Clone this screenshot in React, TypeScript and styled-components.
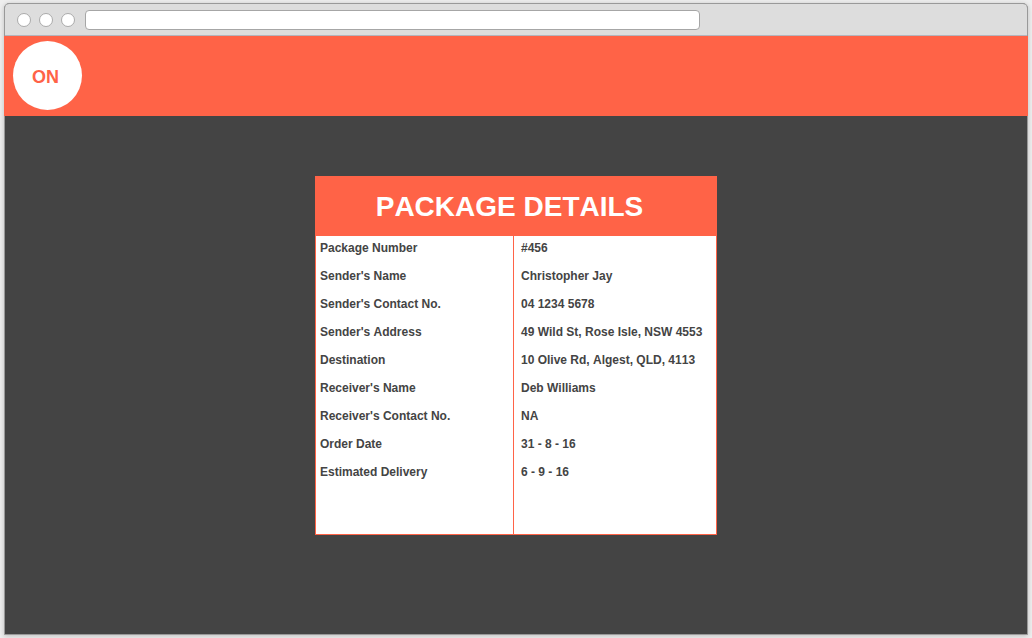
import React from "react";
import styled, { createGlobalStyle } from "styled-components";

const GlobalStyle = createGlobalStyle`
  *, *::before, *::after { box-sizing: border-box; }
  body {
    margin: 0;
    background: #eeeeee;
    font-family: "Liberation Sans", Arial, Helvetica, sans-serif;
    font-kerning: none;
    color: #444444;
  }
`;

const Page = styled.div`
  display: flex;
  min-height: 100vh;
  padding: 3px 4px;
`;

const BrowserWindow = styled.div`
  flex: 1;
  display: flex;
  flex-direction: column;
  min-width: 0;
  border: 1px solid #999999;
  border-radius: 5px 5px 0 0;
  background: #444444;
  box-shadow: 0 1px 5px rgba(0, 0, 0, 0.2);
`;

const BrowserBar = styled.div`
  display: flex;
  align-items: center;
  gap: 8px;
  height: 32px;
  padding: 0 12px;
  border-bottom: 1px solid #b4b4bc;
  border-radius: 4px 4px 0 0;
  background: #dddddd;
`;

const WindowDot = styled.span`
  flex: none;
  width: 14px;
  height: 14px;
  border: 1px solid #aaaaaa;
  border-radius: 50%;
  background: #ffffff;
`;

const AddressField = styled.input`
  flex: 0 1 615px;
  min-width: 0;
  height: 20px;
  margin-left: 2px;
  padding: 0 6px;
  border: 1px solid #a6a6a6;
  border-radius: 4px;
  background: #ffffff;
  font: 12px "Liberation Sans", Arial, sans-serif;
  outline: none;
`;

const SiteHeader = styled.header`
  display: flex;
  align-items: flex-start;
  height: 80px;
  margin: 0 -1px;
  padding: 5px 9px;
  background: #ff6347;
`;

const Logo = styled.a`
  display: flex;
  align-items: center;
  justify-content: center;
  width: 69px;
  height: 69px;
  padding: 2px 4px 0 0;
  border-radius: 50%;
  background: #ffffff;
  color: #ff6347;
  font-size: 18px;
  font-weight: 700;
  line-height: 20px;
  text-decoration: none;
`;

const Main = styled.main`
  flex: 1;
  display: flex;
  justify-content: center;
  align-items: flex-start;
  padding: 60px 16px;
`;

const Card = styled.section`
  width: 402px;
  max-width: 100%;
  border: 1px solid #ff6347;
  background: #ffffff;
`;

const CardTitle = styled.h1`
  margin: 0;
  padding: 14px 13px 13px 0;
  background: #ff6347;
  color: #ffffff;
  font-size: 28px;
  line-height: 32px;
  text-align: center;
`;

const DetailsTable = styled.table`
  width: 100%;
  border-collapse: separate;
  border-spacing: 0;
  font-size: 12px;
  font-weight: 700;
  line-height: 16px;
`;

const DetailsRow = styled.tr`
  &:last-child > * {
    padding-bottom: 54px;
  }
`;

const Label = styled.th`
  width: 198px;
  padding: 4px 4px 8px;
  border-right: 1px solid #ff6347;
  text-align: left;
`;

const Value = styled.td`
  padding: 4px 0 8px 7px;
  white-space: nowrap;
`;

const details: [string, string][] = [
  ["Package Number", "#456"],
  ["Sender's Name", "Christopher Jay"],
  ["Sender's Contact No.", "04 1234 5678"],
  ["Sender's Address", "49 Wild St, Rose Isle, NSW 4553"],
  ["Destination", "10 Olive Rd, Algest, QLD, 4113"],
  ["Receiver's Name", "Deb Williams"],
  ["Receiver's Contact No.", "NA"],
  ["Order Date", "31 - 8 - 16"],
  ["Estimated Delivery", "6 - 9 - 16"],
];

export default function App() {
  return (
    <>
      <GlobalStyle />
      <Page>
        <BrowserWindow>
          <BrowserBar>
            <WindowDot />
            <WindowDot />
            <WindowDot />
            <AddressField type="text" aria-label="Address" />
          </BrowserBar>
          <SiteHeader>
            <Logo href="#">ON</Logo>
          </SiteHeader>
          <Main>
            <Card>
              <CardTitle>PACKAGE DETAILS</CardTitle>
              <DetailsTable>
                <tbody>
                  {details.map(([label, value]) => (
                    <DetailsRow key={label}>
                      <Label scope="row">{label}</Label>
                      <Value>{value}</Value>
                    </DetailsRow>
                  ))}
                </tbody>
              </DetailsTable>
            </Card>
          </Main>
        </BrowserWindow>
      </Page>
    </>
  );
}
